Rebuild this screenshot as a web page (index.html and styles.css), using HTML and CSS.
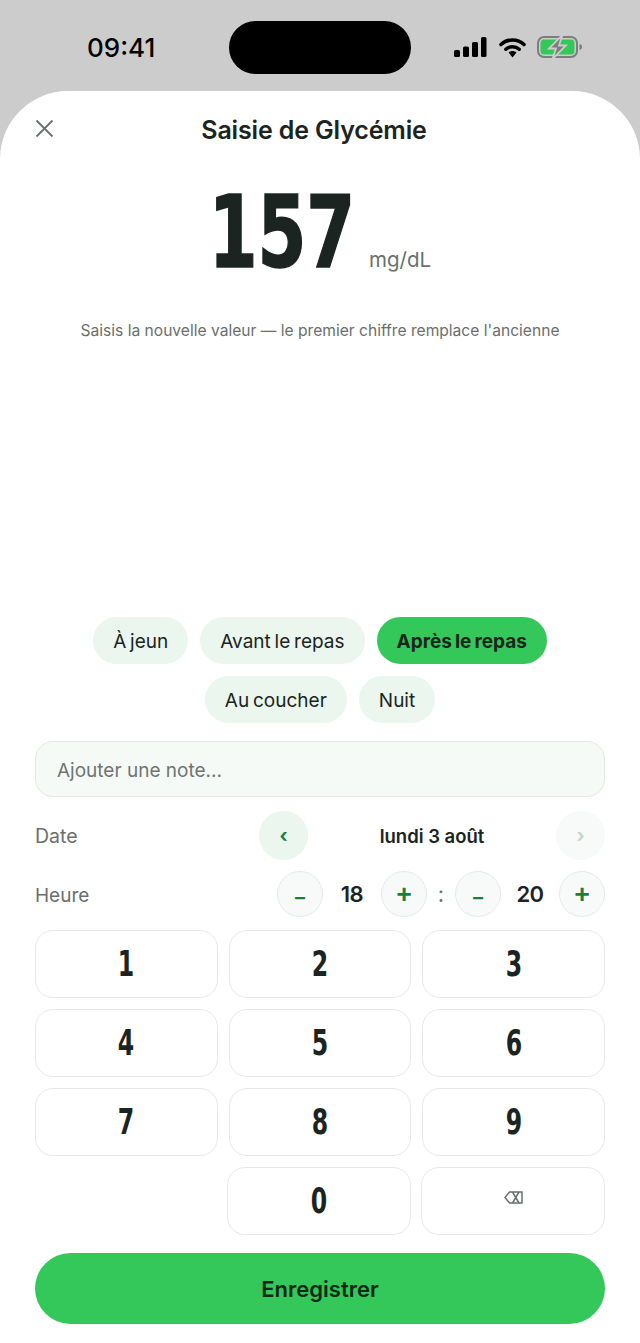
FILE: index.html
```html
<!DOCTYPE html>
<html lang="fr">
<head>
    <meta charset="UTF-8">
    <meta name="viewport" content="width=device-width, initial-scale=1.0">
    <title>Saisie de Glycémie</title>
    <link rel="stylesheet" href="styles.css">
</head>
<body>
    <!-- barre d'état -->
    <div class="status-bar">
        <span class="status-time">09:41</span>
        <div class="island"></div>
        <div class="status-icons">
            <svg width="34" height="20" viewBox="0 0 34 20">
                <rect x="0" y="13" width="6" height="7" rx="1.500" fill="#000"/>
                <rect x="9" y="9.500" width="6" height="10.500" rx="1.500" fill="#000"/>
                <rect x="18" y="5" width="6" height="15" rx="1.500" fill="#000"/>
                <rect x="27" y="0" width="5.500" height="20" rx="1.500" fill="#000"/>
            </svg>
            <svg width="27" height="21" viewBox="0 0 27 21">
                <path d="M2 7.500C8.500 1.500 18.500 1.500 25 7.500" fill="none" stroke="#000" stroke-width="3.600" stroke-linecap="round"/>
                <path d="M6.800 12.300C10.600 8.800 16.400 8.800 20.200 12.300" fill="none" stroke="#000" stroke-width="3.400" stroke-linecap="round"/>
                <path d="M9.500 15.600C11.800 13.600 15.200 13.600 17.500 15.600L13.500 20.500Z" fill="#000"/>
            </svg>
            <svg width="46" height="22" viewBox="0 0 46 22">
                <rect x="1" y="1" width="39" height="20" rx="6" fill="none" stroke="#7d7d7d" stroke-width="2"/>
                <rect x="3.500" y="3.500" width="34" height="15" rx="3.500" fill="#34c759"/>
                <path d="M42.500 8c2 .4 2.500 1.600 2.500 3s-.5 2.600-2.500 3z" fill="#7d7d7d"/>
                <path d="M25.500 -1 12 12.500h7L15.500 23 29 9.500h-7z" fill="#7d7d7d" stroke="#ccc" stroke-width="1.800"/>
            </svg>
        </div>
    </div>

    <main class="sheet">
        <header class="sheet-header">
            <button class="close-btn" aria-label="Fermer">
                <svg width="19" height="19" viewBox="0 0 19 19">
                    <path d="M1.500 1.500 17.500 17.500M17.500 1.500 1.500 17.500" stroke="#6a6f6c" stroke-width="1.800" fill="none"/>
                </svg>
            </button>
            <h1>Saisie de Glycémie</h1>
        </header>

        <div class="value-row">
            <span class="value"><span class="value-digits">157</span></span>
            <span class="unit">mg/dL</span>
        </div>
        <p class="hint">Saisis la nouvelle valeur — le premier chiffre remplace l'ancienne</p>

        <div class="spacer"></div>

        <!-- moment de la mesure -->
        <div class="chips">
            <button class="chip">À jeun</button>
            <button class="chip">Avant le repas</button>
            <button class="chip chip-active">Après le repas</button>
            <button class="chip">Au coucher</button>
            <button class="chip">Nuit</button>
        </div>

        <input class="note" type="text" placeholder="Ajouter une note...">

        <div class="row date-row">
            <span class="row-label">Date</span>
            <div class="date-picker">
                <button class="date-btn">‹</button>
                <span class="date-text">lundi 3 août</span>
                <button class="date-btn date-btn-off">›</button>
            </div>
        </div>

        <div class="row time-row">
            <span class="row-label">Heure</span>
            <div class="time-picker">
                <button class="step-btn step-minus">–</button>
                <span class="time-val">18</span>
                <button class="step-btn">+</button>
                <span class="time-sep">:</span>
                <button class="step-btn step-minus">–</button>
                <span class="time-val">20</span>
                <button class="step-btn">+</button>
            </div>
        </div>

        <!-- pavé numérique -->
        <div class="keypad">
            <button class="key"><span class="key-digit">1</span></button>
            <button class="key"><span class="key-digit">2</span></button>
            <button class="key"><span class="key-digit">3</span></button>
            <button class="key"><span class="key-digit">4</span></button>
            <button class="key"><span class="key-digit">5</span></button>
            <button class="key"><span class="key-digit">6</span></button>
            <button class="key"><span class="key-digit">7</span></button>
            <button class="key"><span class="key-digit">8</span></button>
            <button class="key"><span class="key-digit">9</span></button>
        </div>
        <div class="keypad-last">
            <div></div>
            <button class="key"><span class="key-digit">0</span></button>
            <button class="key key-back" aria-label="Effacer">
                <svg width="19" height="13" viewBox="0 0 19 13">
                    <path d="M5.500 1H18V12H5.500L1 6.500Z" fill="none" stroke="#6a6f6c" stroke-width="1.500"/>
                    <path d="M8.500 1 15 12M15 1 8.500 12" fill="none" stroke="#6a6f6c" stroke-width="1.500"/>
                </svg>
            </button>
        </div>

        <button class="save-btn">Enregistrer</button>
    </main>
</body>
</html>
```
FILE: styles.css
```css
* {
    box-sizing: border-box;
}
body {
    margin: 0;
    height: 1343px;
    display: flex;
    flex-direction: column;
    background-color: #cccccc;
    font-family: Inter, "Noto Sans", sans-serif;
    color: #1c2421;
    overflow: hidden;
}
button {
    font-family: inherit;
    color: inherit;
    padding: 0;
    border: none;
    background: none;
    cursor: pointer;
}

/* barre d'état */
.status-bar {
    height: 91px;
    flex-shrink: 0;
    display: flex;
    align-items: flex-start;
    padding: 21px 0 0 87px;
}
.status-time {
    width: 142px;
    margin-top: 11px;
    font-size: 26px;
    font-weight: 500;
    line-height: 32px;
    color: #000;
}
.island {
    width: 182px;
    height: 53px;
    flex-shrink: 0;
    border-radius: 27px;
    background-color: #000;
}
.status-icons {
    margin-left: 43px;
    margin-top: 15px;
    display: flex;
    align-items: center;
    gap: 11px;
}

/* feuille */
.sheet {
    flex: 1;
    display: flex;
    flex-direction: column;
    padding: 0 35px 19px;
    background-color: #fff;
    border-radius: 68px 68px 0 0;
}
.sheet-header {
    height: 78px;
    display: flex;
    align-items: center;
    position: relative;
}
.sheet-header h1 {
    flex: 1;
    margin: 0;
    padding-right: 12px;
    text-align: center;
    font-size: 25px;
    font-weight: 600;
    letter-spacing: -0.15px;
}
.close-btn {
    position: absolute;
    left: 0;
    top: 28px;
    width: 19px;
    height: 19px;
}

.value-row {
    height: 110px;
    margin-top: 9px;
    display: flex;
    justify-content: center;
    align-items: flex-end;
    gap: 14px;
}
.value {
    width: 146px;
    height: 110px;
    display: flex;
    justify-content: center;
}
.value-digits {
    display: block;
    font-family: "DejaVu Sans", sans-serif;
    font-stretch: condensed;
    font-weight: 700;
    font-size: 100px;
    line-height: 110px;
    -webkit-text-stroke: 1.500px #1c2421;
    transform: scaleX(0.78);
}
.unit {
    margin-bottom: 16px;
    font-size: 20.500px;
    color: #6a6f6c;
}
.hint {
    margin: 32px 0 0;
    text-align: center;
    font-size: 15.600px;
    line-height: 22px;
    color: #6a6f6c;
}
.spacer {
    flex: 1;
}

/* moments */
.chips {
    display: flex;
    flex-wrap: wrap;
    justify-content: center;
    gap: 12px;
}
.chip {
    height: 47px;
    padding: 2px 20px 0;
    border-radius: 24px;
    background-color: #eaf6ee;
    font-size: 19px;
    word-spacing: -1.500px;
}
.chip-active {
    background-color: #34c759;
    font-weight: 700;
}

.note {
    width: 100%;
    height: 56px;
    margin-top: 18px;
    padding: 2px 21px 0;
    border: 1.500px solid #e4e8e5;
    border-radius: 18px;
    background-color: #f6faf7;
    font-family: inherit;
    font-size: 19px;
}
.note::placeholder {
    color: #6f7571;
}

.row {
    display: flex;
    align-items: center;
    justify-content: space-between;
}
.row-label {
    font-size: 19.500px;
    color: #6a6f6c;
}
.date-row {
    height: 49px;
    margin-top: 14px;
}
.date-picker {
    width: 346px;
    display: flex;
    align-items: center;
    justify-content: space-between;
}
.date-btn {
    width: 49px;
    height: 49px;
    border-radius: 50%;
    background-color: #eaf6ee;
    color: #1a7f3c;
    font-size: 19px;
    font-weight: 700;
}
.date-btn-off {
    background-color: #f7faf8;
    color: #c4d6cb;
}
.date-text {
    font-size: 18.500px;
    font-weight: 600;
}
.time-row {
    height: 46px;
    margin-top: 11px;
}
.time-row .row-label {
    padding-top: 2px;
    font-size: 19px;
}
.time-picker {
    display: flex;
    align-items: center;
}
.step-btn {
    width: 46px;
    height: 46px;
    padding-bottom: 3px;
    border-radius: 50%;
    border: 1.500px solid #e6eae7;
    background-color: #f8faf9;
    color: #1a7f3c;
    font-size: 27px;
    font-weight: 600;
    line-height: 1;
}
.step-minus {
    padding: 5px 0 0;
    font-size: 20px;
    font-weight: 700;
}
.time-val {
    width: 58px;
    text-align: center;
    font-size: 22px;
    font-weight: 600;
    letter-spacing: -0.5px;
}
.time-sep {
    width: 28px;
    text-align: center;
    font-size: 22px;
    color: #6a6f6c;
}

/* pavé numérique */
.keypad {
    margin-top: 13px;
    display: grid;
    grid-template-columns: repeat(3, 1fr);
    grid-auto-rows: 68px;
    gap: 11px;
}
.keypad-last {
    margin-top: 11px;
    display: grid;
    grid-template-columns: 1fr 184px 184px;
    grid-auto-rows: 68px;
    gap: 10px;
}
.key {
    border: 1.500px solid #e6e9e7;
    border-radius: 18px;
    background-color: #fff;
}
.key-digit {
    display: inline-block;
    font-family: "DejaVu Sans", sans-serif;
    font-stretch: condensed;
    font-weight: 700;
    font-size: 35px;
    transform: scaleX(0.75);
}
.key-back svg {
    display: block;
    margin: -8px auto 0;
}

.save-btn {
    height: 71px;
    margin-top: 18px;
    border-radius: 36px;
    background-color: #34c759;
    color: #0f2a18;
    font-size: 22px;
    font-weight: 600;
}
```
